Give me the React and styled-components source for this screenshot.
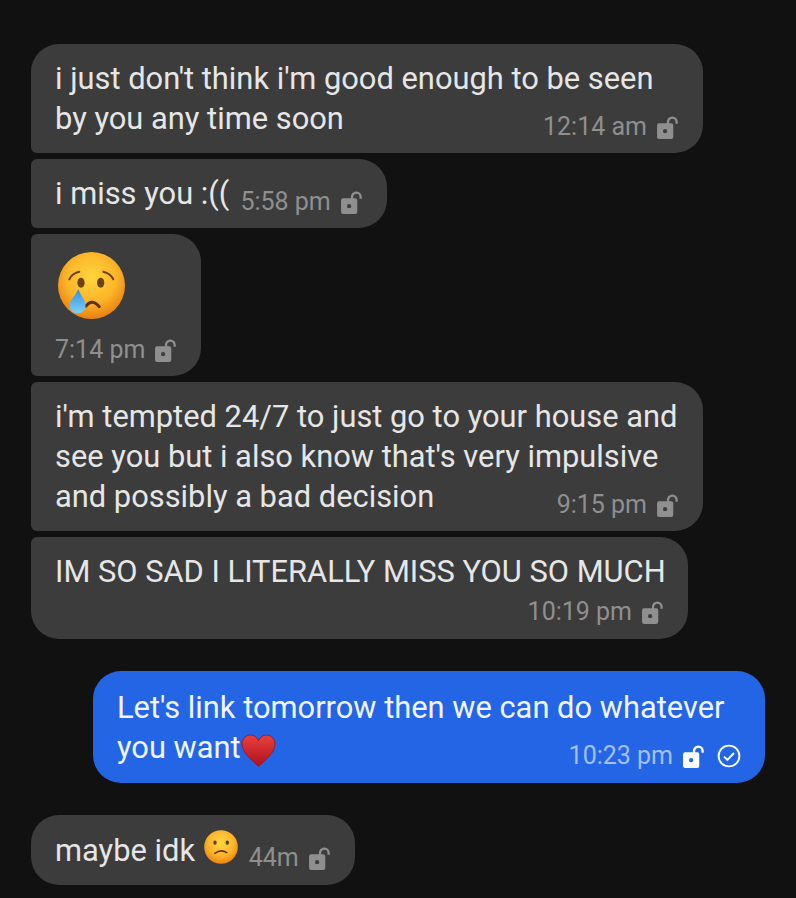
import styled, { createGlobalStyle } from "styled-components"

const GlobalStyle = createGlobalStyle`
    html, body {
        margin: 0;
        background-color: #111111;
    }
`

const RADIUS = {
    first: "28px 28px 28px 6px",
    mid: "6px 28px 28px 6px",
    last: "6px 28px 28px 28px",
    solo: "28px",
}

const Thread = styled.main`
    box-sizing: border-box;
    width: 796px;
    height: 898px;
    padding: 44px 31px 13px;
    display: flex;
    flex-direction: column;
    gap: 32px;
    overflow: hidden;
    font-family: Roboto, "Liberation Sans", sans-serif;
`

const Group = styled.section`
    display: flex;
    flex-direction: column;
    align-items: ${(p) => (p.$mine ? "flex-end" : "flex-start")};
    gap: 6px;
`

const Bubble = styled.div`
    display: flow-root;
    box-sizing: border-box;
    width: fit-content;
    max-width: ${(p) => p.$max || 672}px;
    padding: ${(p) => (p.$mine ? "17px 22px 15px 24px" : "15px 22px 14px 24px")};
    border-radius: ${(p) => RADIUS[p.$pos || "solo"]};
    background-color: ${(p) => (p.$mine ? "#2465e6" : "#3c3c3c")};
    color: ${(p) => (p.$mine ? "#f0f4fd" : "#e6e6e6")};
    font-size: 30.85px;
    line-height: 40px;
`

const Meta = styled.div`
    float: ${(p) => (p.$left ? "none" : "right")};
    display: flex;
    align-items: center;
    gap: 9px;
    margin-top: ${(p) => p.$top ?? 16}px;
    margin-right: 2px;
    margin-bottom: ${(p) => p.$bottom ?? 0}px;
    margin-left: ${(p) => (p.$left ? 0 : 11)}px;
    color: ${(p) => (p.$mine ? "#a4c0f6" : "#8f8f8f")};
    font-size: 25px;
    line-height: 24px;
`

const BigEmoji = styled.svg`
    display: block;
    width: 70px;
    height: 70px;
    margin: 2px 0 0 2px;
`

const InlineEmoji = styled.svg`
    width: ${(p) => p.$size}px;
    height: ${(p) => p.$size}px;
    margin-left: ${(p) => p.$nudge ?? 0}px;
    vertical-align: ${(p) => p.$drop}px;
`

const CheckMark = styled.svg`
    width: 24px;
    height: 24px;
    margin-left: 3px;
`

const LockIcon = ({ fill, hole }) => (
    <svg width="23" height="23" viewBox="0 0 22 22" aria-hidden="true">
        <path d="M11.5 8V5.6a4.1 4.1 0 0 1 8.2 0V7.5" fill="none" stroke={fill} strokeWidth="2.2" />
        <rect x="1" y="7" width="15.5" height="15" rx="2" fill={fill} />
        <circle cx="8.7" cy="14.5" r="2" fill={hole} />
    </svg>
)

const CheckIcon = () => (
    <CheckMark viewBox="0 0 24 24" fill="none" stroke="#ffffff" aria-hidden="true">
        <circle cx="12" cy="12" r="10.4" strokeWidth="1.9" />
        <path d="M7 12.6l3.4 3.2L17 9" strokeWidth="1.9" />
    </CheckMark>
)

const CryingFace = () => (
    <BigEmoji viewBox="0 0 70 70" aria-label="crying face">
        <defs>
            <radialGradient id="cryFace" cx="50%" cy="38%" r="62%">
                <stop offset="0%" stopColor="#ffd53c" />
                <stop offset="60%" stopColor="#fcb52a" />
                <stop offset="100%" stopColor="#e98010" />
            </radialGradient>
            <linearGradient id="tear" x1="0" y1="0" x2="0" y2="1">
                <stop offset="0%" stopColor="#2f8fe0" />
                <stop offset="100%" stopColor="#7fd2f7" />
            </linearGradient>
        </defs>
        <circle cx="34.5" cy="34.5" r="33.5" fill="url(#cryFace)" />
        <ellipse cx="24" cy="31.7" rx="3.6" ry="5" fill="#6b4210" />
        <ellipse cx="43.7" cy="31.7" rx="3.6" ry="5" fill="#6b4210" />
        <path d="M12.3 28.3Q15 22.5 22.3 20.7" fill="none" stroke="#6b4210" strokeWidth="2" strokeLinecap="round" />
        <path d="M46.3 20.7Q53.5 22.5 56.3 28.3" fill="none" stroke="#6b4210" strokeWidth="2" strokeLinecap="round" />
        <path d="M29 55Q35 47 42.3 55.7" fill="none" stroke="#5b340c" strokeWidth="3" strokeLinecap="round" />
        <path d="M21.3 38C19 44.5 12.5 49 12.5 54.5a8 8 0 0 0 16 0C28.5 49 23.5 44.5 21.3 38Z" fill="url(#tear)" />
    </BigEmoji>
)

const ConfusedFace = () => (
    <InlineEmoji $size={34} $drop={-3} $nudge={1} viewBox="0 0 34 34" aria-label="confused face">
        <defs>
            <radialGradient id="sadFace" cx="50%" cy="38%" r="62%">
                <stop offset="0%" stopColor="#ffd644" />
                <stop offset="60%" stopColor="#fcb62c" />
                <stop offset="100%" stopColor="#ea8412" />
            </radialGradient>
        </defs>
        <circle cx="17" cy="17" r="16.8" fill="url(#sadFace)" />
        <ellipse cx="11" cy="12.7" rx="1.7" ry="2.1" fill="#5e3a0e" />
        <ellipse cx="23.3" cy="12.7" rx="1.7" ry="2.1" fill="#5e3a0e" />
        <path d="M10.8 23.3Q17 18.8 22.8 22.6" fill="none" stroke="#5e3a0e" strokeWidth="1.6" strokeLinecap="round" />
    </InlineEmoji>
)

const Heart = () => (
    <InlineEmoji $size={35} $drop={-10} viewBox="0 0 35 35" aria-label="heart">
        <defs>
            <linearGradient id="heartFill" x1="0" y1="0" x2="0" y2="1">
                <stop offset="0%" stopColor="#e8403c" />
                <stop offset="100%" stopColor="#b0101e" />
            </linearGradient>
        </defs>
        <path
            d="M17.5 33.5C12 27.5 1 20.5 1 11C1 5.5 5 2 9.5 2C13 2 16 4 17.5 7.5C19 4 22 2 25.5 2C30 2 34 5.5 34 11C34 20.5 23 27.5 17.5 33.5Z"
            fill="url(#heartFill)"
            stroke="#8f1220"
            strokeWidth="0.8"
        />
    </InlineEmoji>
)

const Stamp = ({ time, mine, top, bottom, left }) => (
    <Meta $mine={mine} $top={top} $bottom={bottom} $left={left}>
        {time}
        <LockIcon fill={mine ? "#ffffff" : "#8f8f8f"} hole={mine ? "#2465e6" : "#3c3c3c"} />
        {mine && <CheckIcon />}
    </Meta>
)

export default function App() {
    return (
        <Thread>
            <GlobalStyle />
            <Group>
                <Bubble $pos="first">
                    i just don't think i'm good enough to be seen by you any time soon
                    <Stamp time="12:14 am" />
                </Bubble>
                <Bubble $pos="mid">
                    i miss you :((
                    <Stamp time="5:58 pm" />
                </Bubble>
                <Bubble $pos="mid">
                    <CryingFace />
                    <Stamp time="7:14 pm" top={17} left />
                </Bubble>
                <Bubble $pos="mid">
                    i'm tempted 24/7 to just go to your house and see you but i also know that's very impulsive and possibly a bad decision
                    <Stamp time="9:15 pm" />
                </Bubble>
                <Bubble $pos="last" $max={657}>
                    IM SO SAD I LITERALLY MISS YOU SO MUCH
                    <Stamp time="10:19 pm" top={8} bottom={1} />
                </Bubble>
            </Group>
            <Group $mine>
                <Bubble $mine>
                    Let's link tomorrow then we can do whatever you want<Heart />
                    <Stamp time="10:23 pm" mine />
                </Bubble>
            </Group>
            <Group>
                <Bubble>
                    maybe idk <ConfusedFace />
                    <Stamp time="44m" />
                </Bubble>
            </Group>
        </Thread>
    )
}
